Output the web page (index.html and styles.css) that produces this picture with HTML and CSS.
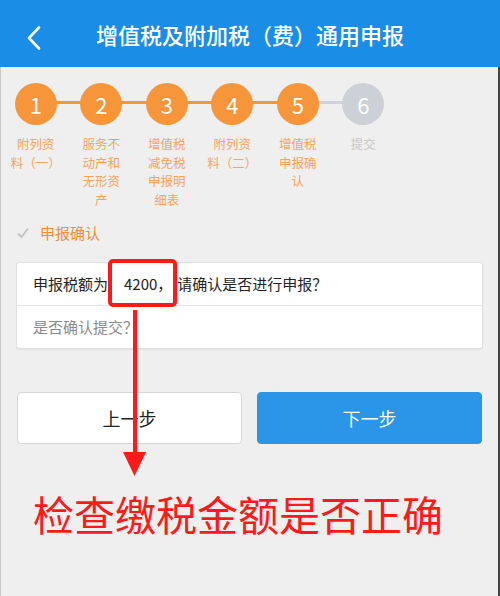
FILE: index.html
```html
<!DOCTYPE html>
<html lang="zh-CN">
<head>
    <meta charset="UTF-8">
    <meta name="viewport" content="width=device-width, initial-scale=1.0">
    <title>增值税及附加税（费）通用申报</title>
    <link rel="stylesheet" href="styles.css">
</head>
<body>
    <div class="page">
        <header class="topbar">
            <svg class="back" width="14" height="24" viewBox="0 0 14 24">
                <polyline points="12,1.5 2,12 12,22.5" fill="none" stroke="#fff" stroke-width="2.6" stroke-linecap="round" stroke-linejoin="round"/>
            </svg>
            <h1 class="title">增值税及附加税（费）通用申报</h1>
        </header>

        <main class="content">
            <ol class="steps">
                <li class="step done"><span class="dot">1</span><span class="label">附列资<br>料（一）</span></li>
                <li class="step done"><span class="dot">2</span><span class="label">服务不<br>动产和<br>无形资<br>产</span></li>
                <li class="step done"><span class="dot">3</span><span class="label">增值税<br>减免税<br>申报明<br>细表</span></li>
                <li class="step done"><span class="dot">4</span><span class="label">附列资<br>料（二）</span></li>
                <li class="step done"><span class="dot">5</span><span class="label">增值税<br>申报确<br>认</span></li>
                <li class="step todo"><span class="dot">6</span><span class="label">提交</span></li>
            </ol>

            <div class="section-title">
                <svg width="12" height="12" viewBox="0 0 12 12">
                    <polyline points="1,6.5 4.5,10 11,1.5" fill="none" stroke="#c4c4c4" stroke-width="2"/>
                </svg>
                申报确认
            </div>

            <div class="card">
                <div class="row">申报税额为<span class="amount">4200，</span>请确认是否进行申报？</div>
                <div class="row muted">是否确认提交？</div>
            </div>

            <div class="actions">
                <button class="btn">上一步</button>
                <button class="btn primary">下一步</button>
            </div>

            <p class="note">检查缴税金额是否正确</p>
        </main>

        <!-- annotation arrow -->
        <svg class="arrow" width="30" height="170" viewBox="0 0 30 170">
            <line x1="15" y1="0" x2="15" y2="146" stroke="#ff1a1a" stroke-width="4"/>
            <polygon points="3,142 26,142 14.5,166" fill="#ff1a1a"/>
        </svg>
    </div>
</body>
</html>
```

FILE: styles.css
```css
body {
    margin: 0;
    background: #efefef;
    font-family: "Noto Sans CJK SC", "Noto Sans", sans-serif;
}
.page {
    position: relative;
    width: 500px;
    height: 596px;
    overflow: hidden;
    background: #efefef;
}
.topbar {
    position: relative;
    height: 67px;
    background: #1a8de6;
    display: flex;
    align-items: center;
    justify-content: center;
}
.back {
    position: absolute;
    left: 27px;
    top: 26px;
}
.title {
    margin: 0;
    color: #fff;
    font-size: 22px;
    font-weight: 500;
    line-height: 30px;
}
.content {
    height: 529px;
    border-left: 1px solid #c8c8c8;
    border-right: 2px solid #444;
    box-sizing: border-box;
}
.steps {
    list-style: none;
    margin: 0;
    padding: 16px 0 0 2px;
    display: flex;
}
.step {
    position: relative;
    width: 65.5px;
    display: flex;
    flex-direction: column;
    align-items: center;
}
.step + .step::before {
    content: "";
    position: absolute;
    top: 18px;
    left: -50%;
    width: 100%;
    height: 3px;
    background: #f7953b;
}
.step.todo::before {
    background: #d0d3d9;
}
.dot {
    position: relative;
    z-index: 1;
    width: 42px;
    height: 42px;
    border-radius: 50%;
    background: #f7953b;
    color: #fff;
    font-size: 22px;
    line-height: 42px;
    text-align: center;
}
.todo .dot {
    background: #cdd0d6;
}
.label {
    margin-top: 10px;
    font-size: 12.5px;
    line-height: 18.7px;
    text-align: center;
    color: #f5a462;
}
.todo .label {
    color: #c9c9c9;
}
.section-title {
    margin: 13px 0 0 16px;
    display: flex;
    align-items: center;
    gap: 11px;
    font-size: 15px;
    line-height: 20px;
    color: #ef8d3e;
}
.card {
    margin: 19px 15px 0 15px;
    background: #fff;
    border: 1px solid #e0e0e0;
    border-radius: 3px;
    box-shadow: 0 1px 1px rgba(0, 0, 0, 0.06);
}
.row {
    height: 42px;
    line-height: 42px;
    padding-left: 16px;
    font-size: 15px;
    color: #222;
}
.row + .row {
    border-top: 1px solid #e4e4e4;
}
.row.muted {
    color: #8a8a8a;
}
.amount {
    position: relative;
    display: inline-block;
    padding: 0 5px 0 16px;
}
.amount::after {
    content: "";
    position: absolute;
    top: -4px;
    bottom: -2px;
    left: 0;
    right: 0;
    border: 4px solid #ff1a1a;
    border-radius: 5px;
}
.actions {
    display: flex;
    gap: 15px;
    margin: 43px 16px 0 16px;
}
.btn {
    flex: 1;
    height: 52px;
    font-family: inherit;
    font-size: 18px;
    border-radius: 4px;
    border: 1px solid #d6d6d6;
    background: #fff;
    color: #222;
}
.btn.primary {
    background: #2b96e8;
    border-color: #2b96e8;
    color: #fff;
}
.note {
    margin: 45px 0 0 32px;
    font-size: 41px;
    line-height: 48px;
    color: #ff1a1a;
}
.arrow {
    position: absolute;
    left: 120px;
    top: 310px;
}
```
